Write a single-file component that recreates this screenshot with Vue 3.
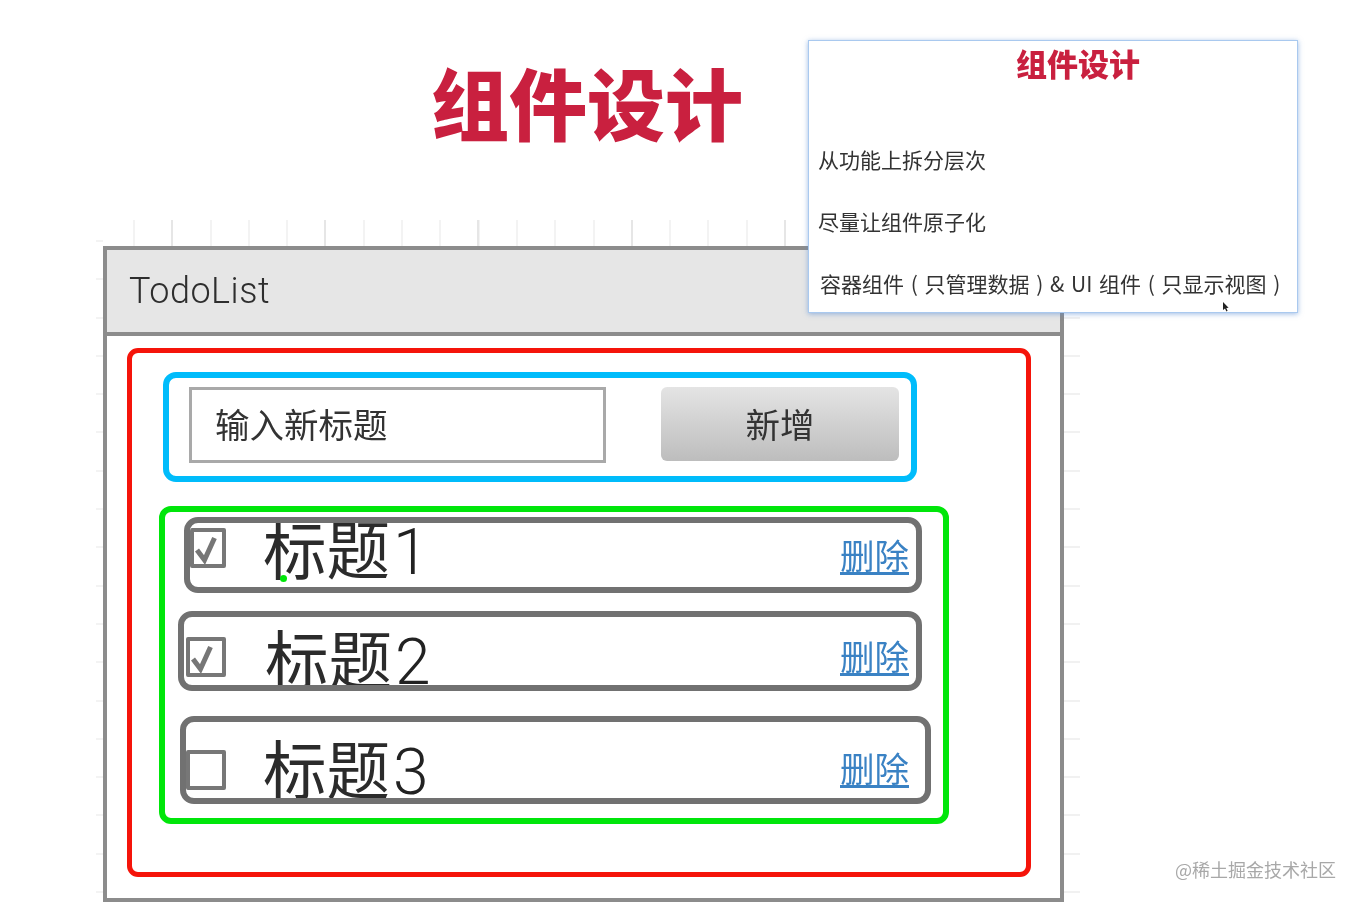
<script setup>
const rows = [
  { id: 'r1', title: '标题', num: '1', checked: true, dot: true },
  { id: 'r2', title: '标题', num: '2', checked: true, dot: false },
  { id: 'r3', title: '标题', num: '3', checked: false, dot: false }
]
const points = ['从功能上拆分层次', '尽量让组件原子化', '容器组件 ( 只管理数据 ) & UI 组件 ( 只显示视图 )']
</script>

<template>
  <div class="page">
    <header class="hero">
      <h1 class="hero-title">组件设计</h1>
    </header>

    <div class="ticks ticks-top"></div>
    <div class="ticks ticks-left"></div>
    <div class="ticks ticks-right"></div>

    <section class="window">
      <div class="win-head">TodoList</div>
      <div class="app-box">
        <div class="input-box">
          <div class="fake-input">输入新标题</div>
          <div class="fake-btn">新增</div>
        </div>
        <div class="list-box">
          <div v-for="row in rows" :key="row.id" class="row" :class="row.id">
            <span class="check">
              <svg v-if="row.checked" viewBox="0 0 32 32" width="32" height="32">
                <path d="M3 18 L10.500 28 L20.500 6" fill="none" stroke="#767676" stroke-width="5" />
              </svg>
            </span>
            <span class="row-title">{{ row.title }}<span class="num">{{ row.num }}</span></span>
            <a class="del">删除</a>
            <i v-if="row.dot" class="dot"></i>
          </div>
        </div>
      </div>
    </section>

    <aside class="popup">
      <h2 class="popup-title">组件设计</h2>
      <p v-for="(p, i) in points" :key="i" class="point" :class="{ last: i === 2 }">{{ p }}</p>
      <svg class="cursor" viewBox="0 0 8 10" width="8" height="10">
        <path d="M1 0 L1 8 L3 6.4 L4.4 9.4 L5.6 8.8 L4.3 6 L6.6 5.8 Z" fill="#222" />
      </svg>
    </aside>

    <div class="watermark">@稀土掘金技术社区</div>
  </div>
</template>

<style scoped>
.page {
  position: relative;
  width: 1360px;
  height: 905px;
  overflow: hidden;
  background: #fff;
  font-family: "Noto Sans CJK SC", "Liberation Sans", sans-serif;
  color: #333;
  filter: blur(0.4px);
}
.hero {
  width: 1174px;
  height: 246px;
  padding-top: 54px;
  box-sizing: border-box;
  text-align: center;
}
.hero-title {
  margin: 0;
  font-size: 78px;
  line-height: 94px;
  font-weight: 900;
  color: #c9203f;
}
.ticks { position: absolute; }
.ticks-top {
  left: 133px;
  top: 220px;
  width: 930px;
  height: 26px;
  background:
    repeating-linear-gradient(90deg, transparent 0 38px, #e6e6e6 38px 40px, transparent 40px 153.2px),
    repeating-linear-gradient(90deg, #f3f3f3 0 2px, transparent 2px 38.3px);
}
.ticks-left {
  left: 96px;
  top: 240px;
  width: 7px;
  height: 660px;
  background: repeating-linear-gradient(180deg, #f3f3f3 0 2px, transparent 2px 38.3px);
}
.ticks-right {
  left: 1064px;
  top: 240px;
  width: 16px;
  height: 660px;
  background: repeating-linear-gradient(180deg, #f1f1f1 0 2px, transparent 2px 38.3px);
}
.window {
  position: relative;
  width: 961px;
  height: 656px;
  margin-left: 103px;
  box-sizing: border-box;
  border: 4px solid #8c8c8c;
  background: #fff;
}
.win-head {
  height: 86px;
  box-sizing: border-box;
  padding-left: 22px;
  border-bottom: 4px solid #8c8c8c;
  background: #e6e6e6;
  font-family: Roboto, "Liberation Sans", sans-serif;
  font-weight: 300;
  font-size: 36px;
  letter-spacing: 0.5px;
  line-height: 82px;
  color: #2e2e2e;
}
.app-box {
  width: 904px;
  height: 529px;
  margin: 12px 0 0 20px;
  box-sizing: border-box;
  border: 5px solid #f5140a;
  border-radius: 11px;
  overflow: hidden;
}
.input-box {
  display: flex;
  align-items: flex-start;
  width: 754px;
  height: 110px;
  margin: 19px 0 0 31px;
  padding: 9px 0 0 20px;
  box-sizing: border-box;
  border: 6px solid #00bcfb;
  border-radius: 13px;
}
.fake-input {
  width: 417px;
  height: 76px;
  box-sizing: border-box;
  padding-left: 23px;
  border: 3px solid #a9a9a9;
  font-size: 34.5px;
  line-height: 66px;
}
.fake-btn {
  width: 238px;
  height: 74px;
  margin-left: 55px;
  border-radius: 6px;
  background: linear-gradient(180deg, #e4e4e4, #bdbdbd);
  font-size: 34.5px;
  line-height: 72px;
  text-align: center;
}
.list-box {
  width: 790px;
  height: 318px;
  margin: 24px 0 0 27px;
  box-sizing: border-box;
  border: 6px solid #00e60a;
  border-radius: 12px;
}
.row {
  position: relative;
  display: flex;
  align-items: flex-start;
  box-sizing: border-box;
  border: 6px solid #717171;
  border-radius: 14px;
  overflow: hidden;
}
.r1 { width: 738px; height: 76px; margin: 5px 0 0 19px; }
.r2 { width: 744px; height: 80px; margin: 18px 0 0 13px; }
.r3 { width: 751px; height: 88px; margin: 25px 0 0 15px; }
.check {
  flex: none;
  box-sizing: border-box;
  width: 40px;
  height: 40px;
  border: 4px solid #777;
  border-radius: 2px;
}
.check svg { display: block; }
.r1 .check { margin: 5px 0 0 0; width: 36px; }
.r2 .check { margin: 20px 0 0 2px; }
.r3 .check { margin: 28px 0 0 0; }
.row-title {
  flex: none;
  font-size: 63.500px;
  line-height: 70px;
  white-space: nowrap;
  color: #2b2b2b;
}
.num {
  margin-left: 3px;
  font-family: Roboto, sans-serif;
  font-weight: 300;
  font-size: 64px;
  color: #222;
}
.r1 .row-title { margin: -12px 0 0 37px; }
.r2 .row-title { margin: 4px 0 0 39px; }
.r3 .row-title { margin: 9px 0 0 37px; }
.del {
  margin-left: auto;
  font-size: 34.5px;
  line-height: 44px;
  color: #3a82c4;
  text-decoration: underline;
  text-underline-offset: 3px;
}
.r1 .del { margin-top: 9px; margin-right: 7px; }
.r2 .del { margin-top: 16px; margin-right: 7px; }
.r3 .del { margin-top: 23px; margin-right: 16px; }
.dot {
  position: absolute;
  left: 90px;
  top: 52px;
  width: 7px;
  height: 7px;
  border-radius: 50%;
  background: #00e60a;
}
.popup {
  position: absolute;
  left: 808px;
  top: 40px;
  width: 490px;
  height: 273px;
  box-sizing: border-box;
  padding: 0 9px;
  border: 1px solid #a9c9ef;
  background: #fff;
  box-shadow: 0 1px 5px rgba(90, 140, 210, 0.6);
}
.popup-title {
  margin: 0;
  padding-left: 198px;
  font-size: 31px;
  line-height: 44px;
  font-weight: 900;
  color: #c9203f;
}
.point {
  margin: 0;
  height: 62px;
  font-size: 21px;
  line-height: 62px;
  color: #333;
  white-space: nowrap;
}
.point:first-of-type { margin-top: 43px; }
.point.last { margin-left: 2px; word-spacing: 2px; }
.cursor {
  position: absolute;
  left: 413px;
  top: 261px;
}
.watermark {
  position: absolute;
  right: 24px;
  top: 857px;
  font-size: 18px;
  line-height: 24px;
  color: #a8a8a8;
}
</style>

<style>
html, body { margin: 0; background: #fff; }
</style>
